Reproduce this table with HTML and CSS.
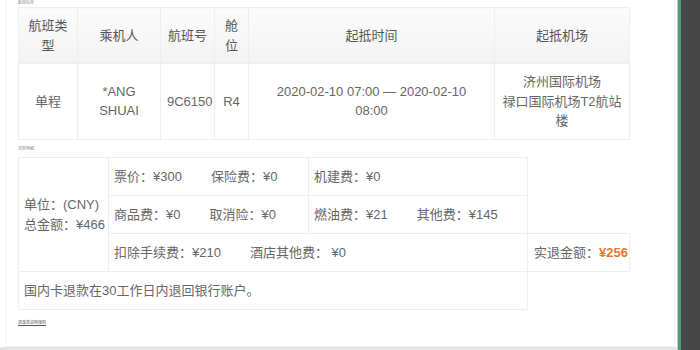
FILE: index.html
```html
<!DOCTYPE html>
<html lang="zh-CN">
<head>
<meta charset="utf-8">
<title>退票详情</title>
<link rel="stylesheet" href="styles.css">
</head>
<body>
<div class="page">
  <main class="main">
    <div class="card">
      <div class="tiny tiny-top">航班信息</div>
      <table class="flight">
        <colgroup>
          <col class="c1"><col class="c2"><col class="c3"><col class="c4"><col class="c5"><col class="c6">
        </colgroup>
        <thead>
          <tr>
            <th>航班类型</th>
            <th>乘机人</th>
            <th>航班号</th>
            <th>舱位</th>
            <th>起抵时间</th>
            <th>起抵机场</th>
          </tr>
        </thead>
        <tbody>
          <tr>
            <td>单程</td>
            <td>*ANG SHUAI</td>
            <td>9C6150</td>
            <td>R4</td>
            <td class="time">2020-02-10 07:00 — 2020-02-10 08:00</td>
            <td>济州国际机场<br>禄口国际机场T2航站楼</td>
          </tr>
        </tbody>
      </table>
      <div class="tiny tiny-mid">退款明细</div>
      <table class="fees">
        <colgroup>
          <col class="f1"><col class="f2"><col class="f3"><col class="f4">
        </colgroup>
        <tbody>
          <tr>
            <td rowspan="3" class="unit">单位：(CNY)<br>总金额：¥466</td>
            <td><span class="item">票价：¥300</span><span class="item">保险费：¥0</span></td>
            <td><span class="item">机建费：¥0</span></td>
            <td class="blank"></td>
          </tr>
          <tr>
            <td><span class="item">商品费：¥0</span><span class="item">取消险：¥0</span></td>
            <td><span class="item">燃油费：¥21</span><span class="item">其他费：¥145</span></td>
            <td class="blank"></td>
          </tr>
          <tr>
            <td colspan="2"><span class="item">扣除手续费：¥210</span><span class="item">酒店其他费： ¥0</span></td>
            <td class="refund">实退金额：<b class="amount">¥256</b></td>
          </tr>
          <tr>
            <td colspan="3" class="notice">国内卡退款在30工作日内退回银行账户。</td>
            <td class="blank"></td>
          </tr>
        </tbody>
      </table>
      <div class="tiny tiny-bottom"><u>退改签说明规则</u></div>
    </div>
    <div class="bottom-bar"></div>
  </main>
  <aside class="side"></aside>
</div>
</body>
</html>
```
FILE: styles.css
```css
html, body {
  margin: 0;
  padding: 0;
  background: #ffffff;
}

body {
  font-family: "Liberation Sans", "Noto Sans CJK SC", sans-serif;
  font-size: 13px;
  color: #666666;
}

.page {
  display: flex;
  width: 700px;
  height: 350px;
  overflow: hidden;
}

.main {
  flex: 1;
  display: flex;
  flex-direction: column;
}

.card {
  flex: 1;
  margin-left: 5px;
  margin-right: 3px;
  padding: 0 0 0 12px;
  border-left: 1px solid #f4f4f4;
  border-right: 1px solid #f0f0f0;
  border-bottom: 1px solid #f0f0f0;
}

.bottom-bar {
  height: 3px;
  background: #e4e4e4;
}

.side {
  width: 19px;
  background: #474747;
  border-left: 3px solid #4f9c77;
  box-shadow: -1px 0 0 #b9dcc9;
}

.tiny {
  font-size: 4px;
  color: #8a8a8a;
  white-space: nowrap;
}

.tiny-top {
  height: 7px;
  line-height: 5px;
}

.tiny-mid {
  height: 17px;
  line-height: 18px;
}

.tiny-bottom {
  margin-top: 10px;
  line-height: 5px;
  color: #555;
}

table {
  border-collapse: collapse;
  table-layout: fixed;
}

td, th {
  border: 1px solid #eeeeee;
  line-height: 19.5px;
  font-weight: normal;
}

.flight {
  width: 611px;
}

.flight .c1 { width: 59px; }
.flight .c2 { width: 83px; }
.flight .c3 { width: 54px; }
.flight .c4 { width: 34px; }
.flight .c5 { width: 246px; }
.flight .c6 { width: 135px; }

.flight th {
  padding: 8px 6px;
  text-align: center;
  color: #555555;
  background: linear-gradient(#fbfbfb, #f3f3f3);
}

.flight td {
  padding: 8px 6px;
  text-align: center;
  color: #666666;
}

.flight td.time {
  padding-left: 18px;
  padding-right: 18px;
}

.fees {
  width: 611px;
}

.fees .f1 { width: 90px; }
.fees .f2 { width: 200px; }
.fees .f3 { width: 219px; }
.fees .f4 { width: 102px; }

.fees td {
  padding: 9px 5px 8px;
  line-height: 20px;
  text-align: left;
  white-space: nowrap;
  color: #666666;
}

.fees .unit {
  padding-left: 5px;
  padding-right: 2px;
}

.fees td.blank {
  border: none;
}

.fees .refund {
  padding-left: 6px;
}

.item {
  margin-right: 29px;
}

.item:last-child {
  margin-right: 0;
}

.amount {
  color: #e8772e;
  font-weight: bold;
}

.notice {
  padding-left: 5px;
}
```
